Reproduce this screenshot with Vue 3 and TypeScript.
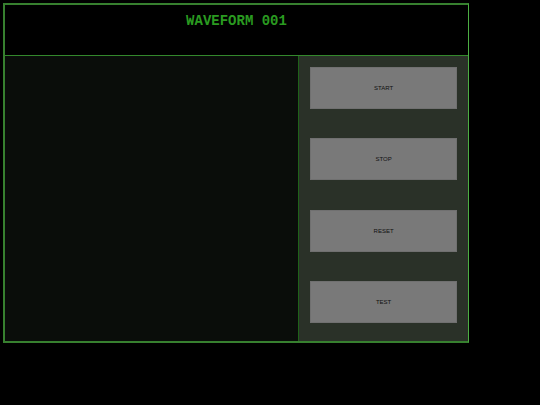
<script setup lang="ts">
import { ref } from 'vue'

type Action = 'START' | 'STOP' | 'RESET' | 'TEST'

const actions: Action[] = ['START', 'STOP', 'RESET', 'TEST']
const lastAction = ref<Action | null>(null)

function run(action: Action): void {
  lastAction.value = action
}
</script>

<template>
  <main class="console">
    <header class="header">
      <h1 class="title">WAVEFORM 001</h1>
    </header>
    <div class="body">
      <section class="display"></section>
      <nav class="controls">
        <button
          v-for="action in actions"
          :key="action"
          type="button"
          class="control"
          @click="run(action)"
        >
          {{ action }}
        </button>
      </nav>
    </div>
  </main>
</template>

<style>
body {
  background: #000;
}
</style>

<style scoped>
.console {
  box-sizing: border-box;
  width: 86.3%;
  margin: 3px;
  border: 2px solid #37802f;
  border-right: 1px solid #4cae43;
  background: #000;
}

.header {
  box-sizing: border-box;
  min-height: 51px;
  padding: 8px;
  border-bottom: 1px solid #33882c;
}

.title {
  margin: 0;
  color: #2a9a20;
  font: bold 14px/16px "Courier New", "Liberation Mono", monospace;
  text-align: center;
}

.body {
  display: grid;
  grid-template-columns: 19fr 11fr;
  min-height: 285px;
}

.display {
  background: #0a0d0a;
}

.controls {
  display: flex;
  flex-direction: column;
  justify-content: space-between;
  padding: 11px 11px 18px;
  border-left: 1px solid #1f6219;
  background: #2a3128;
}

.control {
  height: 42px;
  padding: 0;
  border: 1px solid #707070;
  border-radius: 0;
  background: #797979;
  color: #101010;
  font: 6px/8px "Liberation Sans", Arial, sans-serif;
}
</style>
